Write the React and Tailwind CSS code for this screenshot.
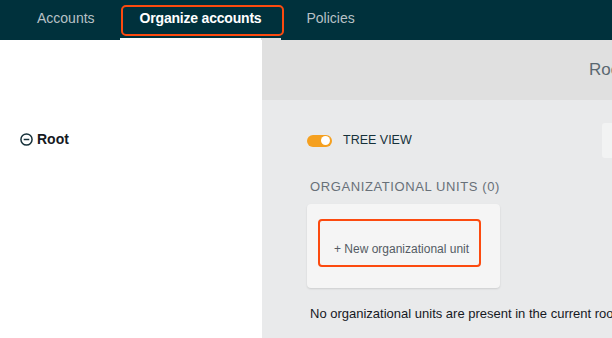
import React, { useState } from 'react';

const tabs = ['Accounts', 'Organize accounts', 'Policies'];

const MinusCircle = () => (
    <svg width="13" height="13" viewBox="0 0 14 14" fill="none" className="shrink-0">
        <circle cx="7" cy="7" r="6" stroke="#16313a" strokeWidth="1.6" />
        <line x1="4" y1="7" x2="10" y2="7" stroke="#16313a" strokeWidth="1.6" />
    </svg>
);

const App = () => {
    const [treeView, setTreeView] = useState(true);
    const active = 'Organize accounts';

    return (
        <div className="w-[612px] h-[338px] overflow-hidden flex flex-col bg-white" style={{ fontFamily: '"Liberation Sans", Arial, sans-serif' }}>
            {/* top nav */}
            <nav className="h-[40px] shrink-0 bg-[#00313c] flex pl-[17px] gap-[5px]">
                {tabs.map(tab => {
                    const isActive = tab === active;
                    return (
                        <div key={tab} className="relative flex items-center px-5 pb-[4px]">
                            {isActive && (
                                <div className="absolute left-[1px] right-[-3px] top-[5px] bottom-[4px] border-2 border-[#fc4a0f] rounded-[5px]" />
                            )}
                            <span className={isActive ? 'text-[14px] text-white font-bold tracking-[-0.2px]' : 'text-[14px] text-[#b8c1c6]'}>
                                {tab}
                            </span>
                            {isActive && (
                                <div className="absolute left-0 right-0 bottom-0 h-[2px] flex">
                                    <div className="w-[141px] bg-white" />
                                    <div className="flex-1 bg-[#e0e0e0]" />
                                </div>
                            )}
                        </div>
                    );
                })}
            </nav>

            <div className="flex flex-1 min-h-0">
                {/* left tree */}
                <aside className="w-[262px] shrink-0 bg-white pt-[89px] pl-[20px]">
                    <div className="flex items-center gap-[4px]">
                        <MinusCircle />
                        <span className="text-[14px] font-bold text-[#16191f]">Root</span>
                    </div>
                </aside>

                {/* right content */}
                <main className="flex-1 min-w-0 overflow-hidden bg-[#e9eaeb] flex flex-col">
                    <div className="h-[60px] shrink-0 bg-[#e0e0e0] flex items-center pl-[327px]">
                        <span className="text-[17px] text-[#5a6770] whitespace-nowrap">Root</span>
                    </div>

                    <div className="pl-[45px] pt-[23px]">
                        <div className="flex items-center w-[400px]">
                            <button
                                type="button"
                                onClick={() => setTreeView(v => !v)}
                                className={`w-[25px] h-[12px] rounded-full flex items-center px-[2px] ${treeView ? 'bg-[#f5a01f] justify-end' : 'bg-[#aab7b8] justify-start'}`}
                            >
                                <span className="w-[9px] h-[9px] rounded-full bg-white" />
                            </button>
                            <span className="ml-[11px] text-[12.5px] text-[#16313a]">TREE VIEW</span>
                            <div className="ml-auto w-[105px] h-[35px] rounded-[3px] bg-[#f2f3f3]" />
                        </div>

                        <h3 className="mt-[19px] ml-[3px] text-[13px] text-[#687078] tracking-[0.6px]">ORGANIZATIONAL UNITS (0)</h3>

                        <div className="mt-[7px] w-[193px] h-[84px] bg-[#f5f5f5] rounded-[4px] shadow-[0_1px_2px_rgba(0,0,0,0.12)] pt-[15px] pl-[11px]">
                            <button
                                type="button"
                                className="w-[163px] h-[48px] border-2 border-[#fc4a0f] rounded-[4px] flex items-end pb-[7px] pl-[14px] text-[12px] text-[#545b64] whitespace-nowrap"
                            >
                                + New organizational unit
                            </button>
                        </div>

                        <p className="mt-[16px] ml-[3px] text-[13px] text-[#16191f] whitespace-nowrap">
                            No organizational units are present in the current root.
                        </p>
                    </div>
                </main>
            </div>
        </div>
    );
};

export default App;
